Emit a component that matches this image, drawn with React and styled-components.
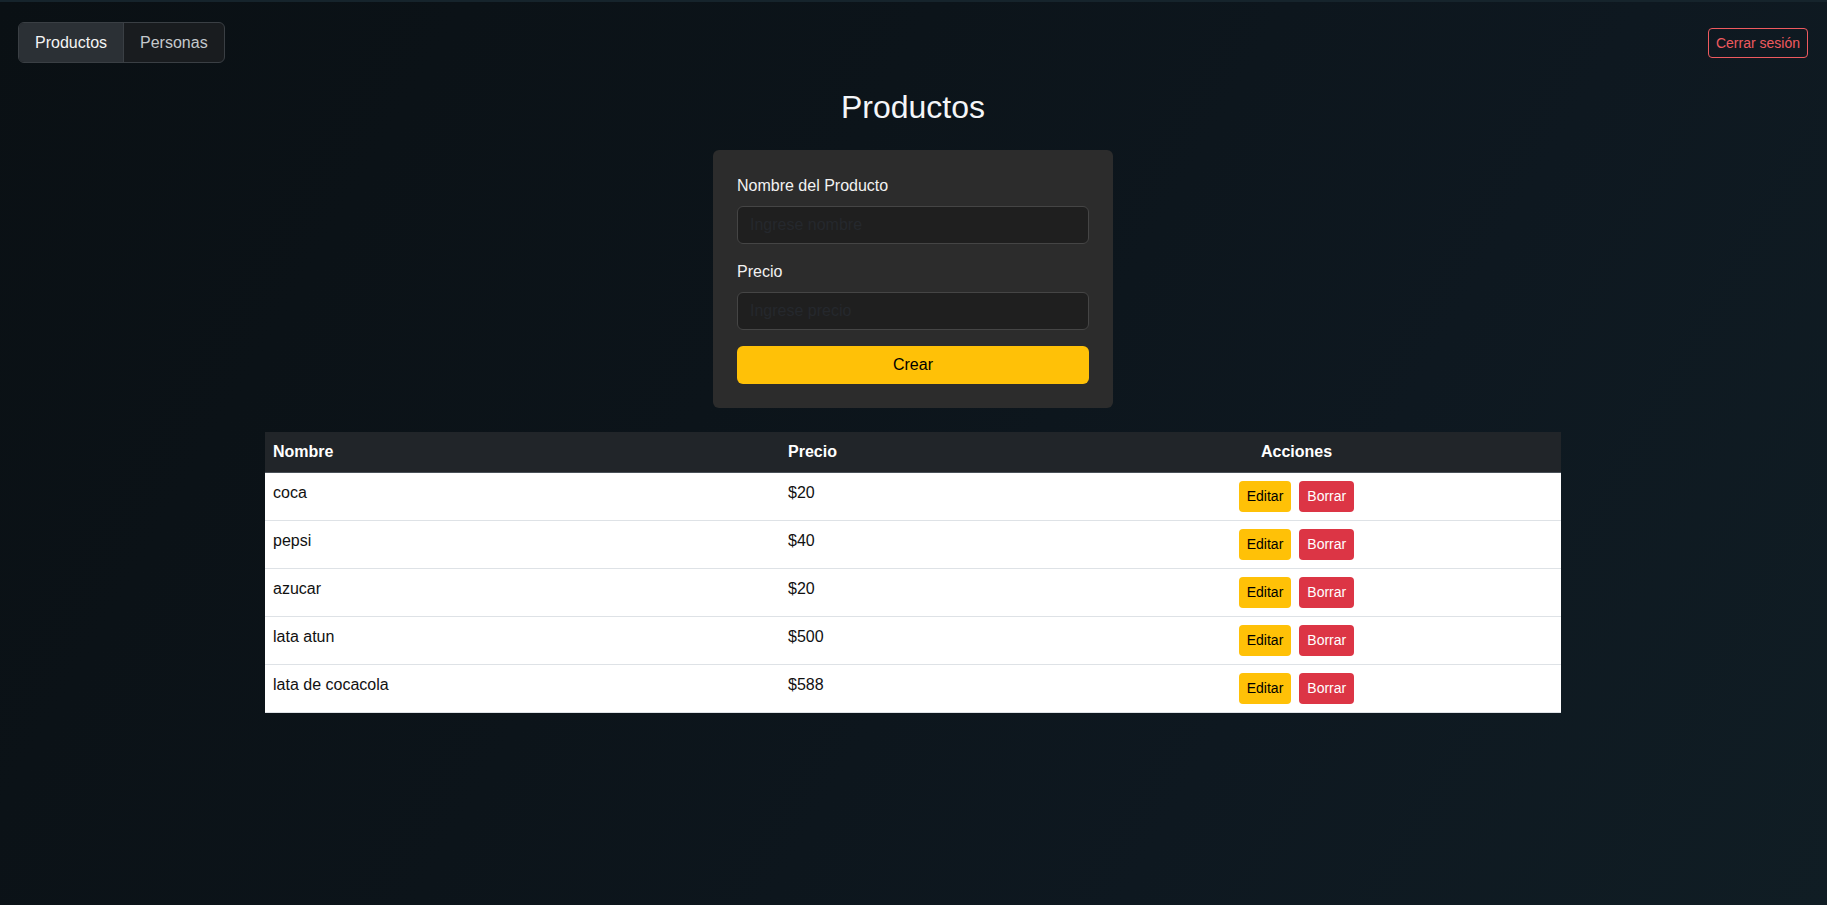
import React from "react";
import styled, { createGlobalStyle } from "styled-components";

const Global = createGlobalStyle`
  html, body { margin: 0; padding: 0; }
  body {
    font-family: "Liberation Sans", Arial, sans-serif;
    min-height: 905px;
    background: linear-gradient(120deg, #0a1014 0%, #0c141a 40%, #0e1820 70%, #101d24 100%);
    color: #fff;
  }
  * { box-sizing: border-box; }
`;

const Page = styled.div`
  min-height: 905px;
  border-top: 2px solid #16242c;
  padding: 20px 19px 0 18px;
`;

const TopBar = styled.div`
  display: flex;
  justify-content: space-between;
  align-items: flex-start;
`;

const TabGroup = styled.div`
  display: flex;
  border: 1px solid #3a3f44;
  border-radius: 6px;
  overflow: hidden;
  background: #191c1f;
`;

const Tab = styled.button`
  font-family: inherit;
  font-size: 16px;
  line-height: 23px;
  padding: 8px 16px;
  border: none;
  border-right: ${(p) => (p.$active ? "1px solid #3a3f44" : "none")};
  background: ${(p) => (p.$active ? "#2b3035" : "transparent")};
  color: ${(p) => (p.$active ? "#f4f4f4" : "#c4c8cc")};
  cursor: pointer;
`;

const Logout = styled.button`
  margin-top: 6px;
  font-family: inherit;
  font-size: 14px;
  line-height: 20px;
  padding: 4px 7px;
  background: transparent;
  border: 1px solid #ee5a5f;
  border-radius: 4px;
  color: #ee5a5f;
`;

const Title = styled.h1`
  margin: 25px 0 24px;
  text-align: center;
  font-weight: 400;
  font-size: 32px;
  line-height: 38px;
  color: #f4f6f8;
`;

const Card = styled.form`
  width: 400px;
  margin: 0 auto;
  background: #2c2c2c;
  border-radius: 6px;
  padding: 24px;
  display: flex;
  flex-direction: column;
`;

const Field = styled.div`
  display: flex;
  flex-direction: column;
  margin-bottom: 16px;
`;

const Label = styled.label`
  font-size: 16px;
  line-height: 24px;
  margin-bottom: 8px;
  color: #f2f2f2;
`;

const Input = styled.input`
  height: 38px;
  padding: 6px 12px;
  font-family: inherit;
  font-size: 16px;
  background: #1f1f1f;
  border: 1px solid #454545;
  border-radius: 6px;
  color: #fff;
  &::placeholder { color: #25282d; }
`;

const Submit = styled.button`
  height: 38px;
  font-family: inherit;
  font-size: 16px;
  background: #ffc107;
  color: #000;
  border: none;
  border-radius: 6px;
`;

const TableWrap = styled.div`
  width: 1296px;
  margin: 24px auto 0;
`;

const Table = styled.table`
  width: 100%;
  border-collapse: collapse;
  table-layout: fixed;
  font-size: 16px;
  line-height: 24px;
`;

const Th = styled.th`
  background: #212529;
  color: #fff;
  font-weight: 700;
  text-align: ${(p) => p.$align || "left"};
  padding: 8px 8px;
  border-bottom: 1px solid #495057;
  width: ${(p) => p.$w || "auto"};
`;

const Td = styled.td`
  background: #fff;
  color: #111;
  padding: 8px 8px;
  vertical-align: top;
  text-align: ${(p) => p.$align || "left"};
  border-bottom: 1px solid #dee2e6;
`;

const Actions = styled.div`
  display: flex;
  justify-content: center;
  gap: 8px;
`;

const SmallBtn = styled.button`
  font-family: inherit;
  font-size: 14px;
  line-height: 21px;
  padding: 5px 8px;
  border: none;
  border-radius: 4px;
  background: ${(p) => (p.$danger ? "#dc3545" : "#ffc107")};
  color: ${(p) => (p.$danger ? "#fff" : "#000")};
`;

const rows = [
  { n: "coca", p: "$20" },
  { n: "pepsi", p: "$40" },
  { n: "azucar", p: "$20" },
  { n: "lata atun", p: "$500" },
  { n: "lata de cocacola", p: "$588" },
];

export default function App() {
  return (
    <>
      <Global />
      <Page>
        <TopBar>
          <TabGroup>
            <Tab $active>Productos</Tab>
            <Tab>Personas</Tab>
          </TabGroup>
          <Logout>Cerrar sesión</Logout>
        </TopBar>
        <Title>Productos</Title>
        <Card onSubmit={(e) => e.preventDefault()}>
          <Field>
            <Label>Nombre del Producto</Label>
            <Input placeholder="Ingrese nombre" />
          </Field>
          <Field>
            <Label>Precio</Label>
            <Input placeholder="Ingrese precio" />
          </Field>
          <Submit type="submit">Crear</Submit>
        </Card>
        <TableWrap>
          <Table>
            <thead>
              <tr>
                <Th $w="515px">Nombre</Th>
                <Th $w="252px">Precio</Th>
                <Th $align="center">Acciones</Th>
              </tr>
            </thead>
            <tbody>
              {rows.map((r) => (
                <tr key={r.n}>
                  <Td>{r.n}</Td>
                  <Td>{r.p}</Td>
                  <Td $align="center">
                    <Actions>
                      <SmallBtn>Editar</SmallBtn>
                      <SmallBtn $danger>Borrar</SmallBtn>
                    </Actions>
                  </Td>
                </tr>
              ))}
            </tbody>
          </Table>
        </TableWrap>
      </Page>
    </>
  );
}
